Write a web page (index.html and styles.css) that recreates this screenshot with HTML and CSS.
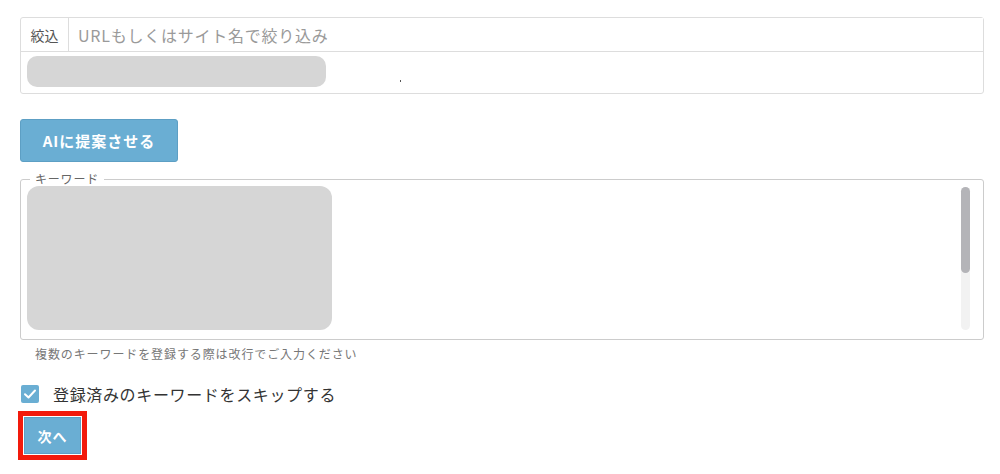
FILE: index.html
```html
<!DOCTYPE html>
<html lang="ja">
<head>
  <meta charset="UTF-8" />
  <meta name="viewport" content="width=device-width, initial-scale=1.0" />
  <title>キーワード登録</title>
  <link rel="stylesheet" href="styles.css">
</head>
<body>
  <div class="container">
    <div class="filter-box">
      <div class="filter-row">
        <span class="filter-label">絞込</span>
        <input class="filter-input" type="text" placeholder="URLもしくはサイト名で絞り込み" />
      </div>
      <div class="site-row">
        <div class="pill"></div>
        <span class="dot"></span>
      </div>
    </div>

    <button class="btn btn-ai">AIに提案させる</button>

    <fieldset class="keywords">
      <legend>キーワード</legend>
      <div class="keywords-body">
        <div class="keywords-block"></div>
        <div class="scrollbar"><div class="thumb"></div></div>
      </div>
    </fieldset>
    <p class="hint">複数のキーワードを登録する際は改行でご入力ください</p>

    <label class="check-row">
      <span class="checkbox">
        <svg width="14" height="14" viewBox="0 0 14 14"><path d="M2 7.2 L5.5 10.5 L12 3.5" fill="none" stroke="#fff" stroke-width="2" stroke-linecap="round" stroke-linejoin="round"/></svg>
      </span>
      登録済みのキーワードをスキップする
    </label>

    <div class="next-wrap">
      <button class="btn btn-next">次へ</button>
    </div>
  </div>
</body>
</html>
```

FILE: styles.css
```css
body {
  margin: 0;
  font-family: "Noto Sans CJK JP", "Noto Sans", sans-serif;
  color: #333;
  background: #fff;
}
.container {
  padding: 17px 16px 0 20px;
}
.filter-box {
  border: 1px solid #ddd;
  border-radius: 3px;
}
.filter-row {
  display: flex;
  height: 33px;
  border-bottom: 1px solid #ddd;
}
.filter-label {
  width: 47px;
  border-right: 1px solid #ddd;
  display: flex;
  align-items: center;
  justify-content: center;
  font-size: 14px;
  color: #555;
}
.filter-input {
  flex: 1;
  border: none;
  outline: none;
  padding: 0 9px;
  font-family: inherit;
  font-size: 16px;
  letter-spacing: 0.75px;
  color: #333;
}
.filter-input::placeholder {
  color: #9a9a9a;
}
.site-row {
  display: flex;
  align-items: flex-start;
  height: 41px;
  padding: 4px 6px 0;
  box-sizing: border-box;
}
.pill {
  width: 299px;
  height: 31px;
  border-radius: 10px;
  background: #d6d6d6;
}
.dot {
  width: 1px;
  height: 2px;
  background: #555;
  margin: 24px 0 0 74px;
}
.btn {
  display: block;
  border: 1px solid #5d9fc4;
  border-radius: 3px;
  background: #6aaed3;
  color: #fff;
  font-family: inherit;
  font-weight: bold;
  cursor: pointer;
}
.btn-ai {
  margin-top: 25px;
  width: 158px;
  height: 43px;
  font-size: 15px;
  letter-spacing: 1px;
}
.keywords {
  margin: 10px 0 0;
  padding: 0 13px 9px 6px;
  border: 1px solid #ccc;
  border-radius: 3px;
}
.keywords legend {
  margin-left: 3px;
  padding: 0 5px;
  font-size: 12px;
  line-height: 14px;
  letter-spacing: 0.8px;
  color: #666;
}
.keywords-body {
  display: flex;
  justify-content: space-between;
  height: 144px;
}
.keywords-block {
  width: 305px;
  height: 144px;
  border-radius: 12px;
  background: #d6d6d6;
}
.scrollbar {
  width: 9px;
  margin-top: 1px;
  border-radius: 5px;
  background: #f2f2f2;
}
.thumb {
  height: 86px;
  border-radius: 5px;
  background: #b4b4b8;
}
.hint {
  margin: 5px 0 0 15px;
  font-size: 12px;
  letter-spacing: 0.9px;
  color: #777;
}
.check-row {
  display: flex;
  align-items: center;
  gap: 14px;
  margin: 20px 0 0 1px;
  font-size: 16px;
  letter-spacing: 0.65px;
  color: #333;
}
.checkbox {
  width: 18px;
  height: 18px;
  border-radius: 2px;
  background: #6aaed3;
  display: flex;
  align-items: center;
  justify-content: center;
}
.next-wrap {
  display: inline-block;
  margin: 5px 0 0 -2px;
  border: 5px solid #f21a0c;
  padding: 1px;
}
.btn-next {
  width: 57px;
  height: 37px;
  border-radius: 0;
  font-size: 14px;
  letter-spacing: 1px;
}
```
